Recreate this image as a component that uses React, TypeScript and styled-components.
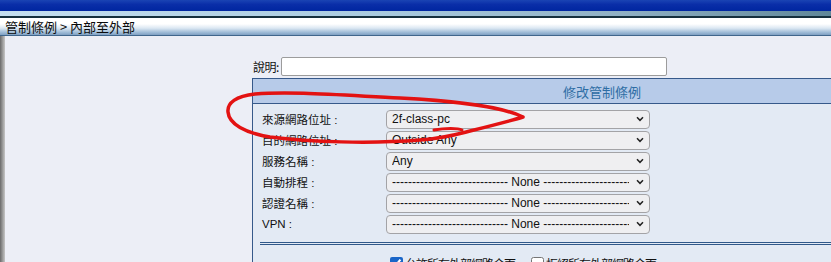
import React from 'react';
import styled, { createGlobalStyle } from 'styled-components';

const GlobalStyle = createGlobalStyle`
  html, body {
    margin: 0;
    padding: 0;
    background: #eceef6;
    overflow: hidden;
  }
  body {
    font-family: "Liberation Sans", "Noto Sans CJK TC", Arial, sans-serif;
    color: #111;
  }
`;

const Page = styled.div`
  position: relative;
  width: 831px;
  height: 262px;
  overflow: hidden;
  display: flex;
  flex-direction: column;
`;

const WindowBand = styled.div`
  flex-shrink: 0;
  height: 11px;
  background: linear-gradient(to bottom, #1a44b4 0%, #0a2ea8 40%, #0026a0 100%);
`;

const GlossStrip = styled.div`
  flex-shrink: 0;
  height: 5px;
  background: linear-gradient(to right, #c4dff0 0%, #a9cbe0 45%, #8fb0c4 75%, #5f8799 100%);
`;

const DarkLine = styled.div`
  flex-shrink: 0;
  height: 2px;
  background: #15303e;
`;

const TitleBar = styled.div`
  flex-shrink: 0;
  height: 17px;
  display: flex;
  align-items: center;
  padding-left: 5px;
  font-family: "Noto Sans CJK TC", "Liberation Sans", sans-serif;
  font-size: 13px;
  color: #0b0b0b;
  background: linear-gradient(to bottom, #ffffff 0%, #ffffff 35%, #dbe7f2 60%, #9dbad6 85%, #7f9fc2 100%);
  border-bottom: 1px solid #40668c;
`;

const Body = styled.div`
  flex: 1 0 auto;
  display: flex;
`;

const LeftEdge = styled.div`
  width: 5px;
  background: linear-gradient(to right, #6a6a6a 0%, #8f8f8f 40%, #c6c6c6 100%);
`;

const Content = styled.div`
  flex: 1;
  padding: 21px 0 0 247px;
  display: flex;
  flex-direction: column;
`;

const DescRow = styled.div`
  display: flex;
  align-items: center;
  height: 19px;
  gap: 2px;
`;

const DescLabel = styled.span`
  font-family: "Noto Sans CJK TC", sans-serif;
  font-size: 12px;
  padding-left: 1px;
  letter-spacing: -0.5px;
`;

const TextInput = styled.input`
  box-sizing: border-box;
  width: 386px;
  height: 19px;
  margin: 0;
  border: 1px solid #9c9c9c;
  border-radius: 2px;
  background: #fff;
`;

const Panel = styled.div`
  margin-top: 2px;
  flex: 1;
  border-left: 1px solid #36598a;
  border-top: 1px solid #36598a;
  background: #e3eaf4;
`;

const PanelHeader = styled.div`
  height: 24px;
  display: flex;
  align-items: center;
  padding-left: 310px;
  background: #b7cbe9;
  border-bottom: 1px solid #36598a;
  color: #2e6da4;
  font-family: "Noto Sans CJK TC", sans-serif;
  font-size: 13px;
`;

const PanelBody = styled.div`
  padding: 5px 0 0 9px;
  display: flex;
  flex-direction: column;
  gap: 2px;
`;

const Row = styled.div`
  display: flex;
  align-items: center;
  height: 19px;
`;

const Label = styled.span`
  width: 124px;
  font-family: "Liberation Sans", "Noto Sans CJK TC", sans-serif;
  font-size: 11.5px;
  color: #111;
  white-space: pre;
`;

const SelectWrap = styled.div`
  position: relative;
  width: 264px;
  height: 19px;
`;

const Select = styled.select`
  appearance: none;
  box-sizing: border-box;
  width: 100%;
  height: 100%;
  margin: 0;
  padding: 0 20px 0 5px;
  border: 1px solid #a3a3a6;
  border-radius: 4px;
  background: #efeff1;
  font-family: "Liberation Sans", Arial, sans-serif;
  font-size: 12px;
  color: #111;
  text-overflow: clip;
`;

const Chevron = styled.svg`
  position: absolute;
  right: 6px;
  top: 7px;
  pointer-events: none;
`;

const Divider = styled.div`
  margin: 9px 0 0 7px;
  height: 0;
  border-top: 3px double #30598a;
`;

const CheckRow = styled.div`
  display: flex;
  align-items: center;
  gap: 16px;
  padding: 10px 0 0 137px;
`;

const CheckLabel = styled.label`
  display: flex;
  align-items: center;
  gap: 2px;
  font-family: "Noto Sans CJK TC", sans-serif;
  font-size: 12px;
  letter-spacing: -1px;
`;

const Check = styled.input`
  width: 13px;
  height: 13px;
  margin: 0;
  accent-color: #1a66c8;
`;

const Scribble = styled.svg`
  position: absolute;
  left: 0;
  top: 0;
  pointer-events: none;
`;

const dashes = '-'.repeat(29);
const none = `${dashes} None ${dashes}`;

const rows = [
  { label: '來源網路位址 :', value: '2f-class-pc' },
  { label: '目的網路位址 :', value: 'Outside Any' },
  { label: '服務名稱 :', value: 'Any' },
  { label: '自動排程 :', value: none },
  { label: '認證名稱 :', value: none },
  { label: 'VPN :', value: none },
];

const App: React.FC = () => {
  return (
    <Page>
      <GlobalStyle />
      <WindowBand />
      <GlossStrip />
      <DarkLine />
      <TitleBar>管制條例 &gt; 內部至外部</TitleBar>
      <Body>
        <LeftEdge />
        <Content>
          <DescRow>
            <DescLabel>說明:</DescLabel>
            <TextInput type="text" defaultValue="" />
          </DescRow>
          <Panel>
            <PanelHeader>修改管制條例</PanelHeader>
            <PanelBody>
              {rows.map((r) => (
                <Row key={r.label}>
                  <Label>{r.label}</Label>
                  <SelectWrap>
                    <Select defaultValue={r.value}>
                      <option value={r.value}>{r.value}</option>
                    </Select>
                    <Chevron width="8" height="6" viewBox="0 0 8 6">
                      <path d="M1 1.2 L4 4.3 L7 1.2" fill="none" stroke="#222" strokeWidth="1.5" />
                    </Chevron>
                  </SelectWrap>
                </Row>
              ))}
            </PanelBody>
            <Divider />
            <CheckRow>
              <CheckLabel>
                <Check type="checkbox" defaultChecked />
                允許所有外部網路介面
              </CheckLabel>
              <CheckLabel>
                <Check type="checkbox" />
                拒絕所有外部網路介面
              </CheckLabel>
            </CheckRow>
          </Panel>
        </Content>
      </Body>
      <Scribble width="831" height="262" viewBox="0 0 831 262">
        <path
          d="M523 117 C505 108 460 101 400 98 C340 95 290 91 255 94 C236 96 227 103 228 112 C229 124 245 133 270 137 C310 142 370 144 420 140 C445 138 458 134 470 131 C490 126 510 121 523 117"
          fill="none"
          stroke="#e31212"
          strokeWidth="3.5"
          strokeLinecap="round"
          strokeLinejoin="round"
        />
        <path d="M434 130 C445 128 458 128 462 130" fill="none" stroke="#e31212" strokeWidth="3" strokeLinecap="round" />
      </Scribble>
    </Page>
  );
};

export default App;
